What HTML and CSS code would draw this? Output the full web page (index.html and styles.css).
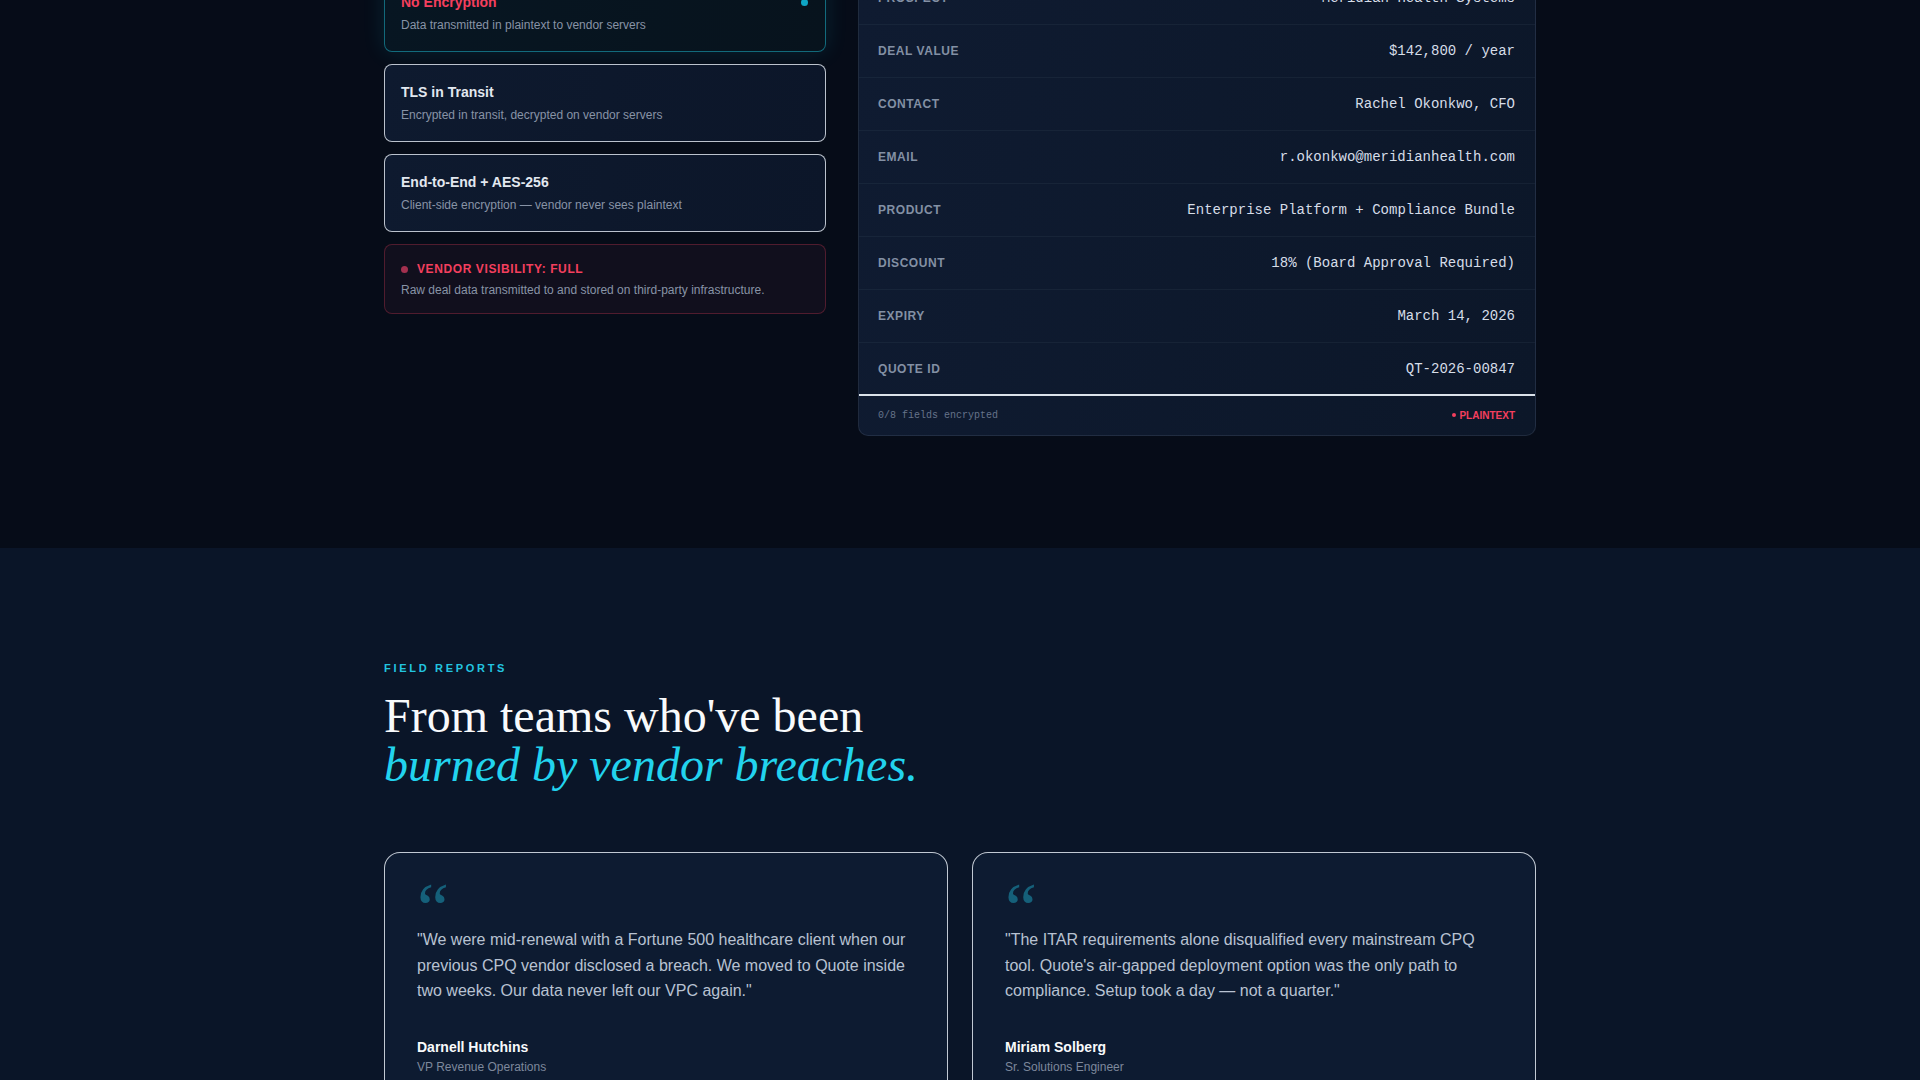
FILE: index.html
```html
<!DOCTYPE html>
<html lang="en">
<head>
<meta charset="utf-8">
<title>Quote — Field Reports</title>
<link rel="stylesheet" href="styles.css">
</head>
<body>
<section class="demo">
  <div class="container demo-grid">
    <div class="levels">
      <div class="level level-active">
        <div class="level-head">
          <span class="level-title level-title-red">No Encryption</span>
          <span class="level-dot"></span>
        </div>
        <p class="level-desc">Data transmitted in plaintext to vendor servers</p>
      </div>
      <div class="level">
        <div class="level-head"><span class="level-title">TLS in Transit</span></div>
        <p class="level-desc">Encrypted in transit, decrypted on vendor servers</p>
      </div>
      <div class="level">
        <div class="level-head"><span class="level-title">End-to-End + AES-256</span></div>
        <p class="level-desc">Client-side encryption — vendor never sees plaintext</p>
      </div>
      <div class="visibility">
        <div class="visibility-head"><span class="visibility-dot"></span><span class="visibility-title">VENDOR VISIBILITY: FULL</span></div>
        <p class="visibility-desc">Raw deal data transmitted to and stored on third-party infrastructure.</p>
      </div>
    </div>

    <div class="quote-panel">
      <div class="row"><span class="row-label">Prospect</span><span class="row-value">Meridian Health Systems</span></div>
      <div class="row"><span class="row-label">Deal Value</span><span class="row-value">$142,800 / year</span></div>
      <div class="row"><span class="row-label">Contact</span><span class="row-value">Rachel Okonkwo, CFO</span></div>
      <div class="row"><span class="row-label">Email</span><span class="row-value">r.okonkwo@meridianhealth.com</span></div>
      <div class="row"><span class="row-label">Product</span><span class="row-value">Enterprise Platform + Compliance Bundle</span></div>
      <div class="row"><span class="row-label">Discount</span><span class="row-value">18% (Board Approval Required)</span></div>
      <div class="row"><span class="row-label">Expiry</span><span class="row-value">March 14, 2026</span></div>
      <div class="row row-last"><span class="row-label">Quote ID</span><span class="row-value">QT-2026-00847</span></div>
      <div class="panel-foot">
        <span class="foot-count">0/8 fields encrypted</span>
        <span class="foot-status"><span class="foot-dot"></span>PLAINTEXT</span>
      </div>
    </div>
  </div>
</section>

<section class="reports">
  <div class="container">
    <p class="eyebrow">FIELD REPORTS</p>
    <h2 class="reports-title">From teams who've been<br><em>burned by vendor breaches.</em></h2>
    <div class="cards">
      <article class="card">
        <div class="card-mark">“</div>
        <p class="card-quote">"We were mid-renewal with a Fortune 500 healthcare client when our previous CPQ vendor disclosed a breach. We moved to Quote inside two weeks. Our data never left our VPC again."</p>
        <div class="card-author">
          <span class="author-name">Darnell Hutchins</span>
          <span class="author-role">VP Revenue Operations</span>
        </div>
      </article>
      <article class="card">
        <div class="card-mark">“</div>
        <p class="card-quote">"The ITAR requirements alone disqualified every mainstream CPQ tool. Quote's air-gapped deployment option was the only path to compliance. Setup took a day — not a quarter."</p>
        <div class="card-author">
          <span class="author-name">Miriam Solberg</span>
          <span class="author-role">Sr. Solutions Engineer</span>
        </div>
      </article>
    </div>
  </div>
</section>
</body>
</html>
```

FILE: styles.css
```css
* { box-sizing: border-box; }

html, body {
  margin: 0;
  padding: 0;
  height: 1080px;
  overflow: hidden;
}

body {
  font-family: "Liberation Sans", Arial, sans-serif;
  background: #060c18;
  color: #e2e8f0;
}

p { margin: 0; }

.container {
  width: 1152px;
  margin: 0 auto;
}

/* ---------- Demo section ---------- */
.demo {
  background: #060c18;
  padding-bottom: 112px;
}

.demo-grid {
  display: grid;
  grid-template-columns: 442px 1fr;
  column-gap: 32px;
  align-items: start;
  margin-top: -28px;
}

.levels {
  display: flex;
  flex-direction: column;
  gap: 12px;
  padding-top: 2px;
}

.level {
  border: 1px solid rgba(226, 232, 240, 0.82);
  border-radius: 8px;
  padding: 17px 16px 17px;
  background: linear-gradient(100deg, #0e1a2f 0%, #0c1629 100%);
}

.level-active {
  border-color: rgba(34, 211, 238, 0.45);
  background: linear-gradient(100deg, #071622 0%, #07131d 100%);
  box-shadow: 0 0 22px rgba(34, 211, 238, 0.12);
}

.level-head {
  display: flex;
  align-items: center;
  justify-content: space-between;
  height: 20px;
  margin-bottom: 4px;
}

.level-title {
  font-size: 14px;
  font-weight: 700;
  color: #e2e8f0;
}

.level-title-red { color: #f43f5e; }

.level-dot {
  width: 7px;
  height: 7px;
  border-radius: 50%;
  background: #0ea5c4;
  margin-right: 1px;
}

.level-desc {
  font-size: 12px;
  line-height: 18px;
  color: #8893a6;
}

.visibility {
  border: 1px solid rgba(244, 63, 94, 0.28);
  border-radius: 8px;
  padding: 15px 16px 14px;
  background: #110f1d;
}

.visibility-head {
  display: flex;
  align-items: center;
  gap: 9px;
  height: 18px;
  margin-bottom: 3px;
}

.visibility-dot {
  width: 7px;
  height: 7px;
  border-radius: 50%;
  background: #a3304f;
}

.visibility-title {
  font-size: 12px;
  font-weight: 700;
  letter-spacing: 0.6px;
  color: #f43f5e;
}

.visibility-desc {
  font-size: 12px;
  line-height: 18px;
  color: #8893a6;
}

.quote-panel {
  background: linear-gradient(100deg, #0f1b31 0%, #0c1729 100%);
  border: 1px solid rgba(148, 163, 184, 0.14);
  border-top: none;
  border-radius: 0 0 10px 10px;
}

.row {
  display: flex;
  align-items: center;
  justify-content: space-between;
  height: 53px;
  padding: 0 20px 0 19px;
  border-bottom: 1px solid rgba(148, 163, 184, 0.07);
}

.row-last {
  border-bottom: 2px solid #dbe2ea;
}

.row-label {
  font-size: 12px;
  font-weight: 700;
  letter-spacing: 0.55px;
  text-transform: uppercase;
  color: #8390a4;
}

.row-value {
  font-family: "Liberation Mono", "Courier New", monospace;
  font-size: 14px;
  color: #d6dde8;
}

.panel-foot {
  display: flex;
  align-items: center;
  justify-content: space-between;
  height: 39px;
  padding: 0 20px 1px 19px;
}

.foot-count {
  font-family: "Liberation Mono", "Courier New", monospace;
  font-size: 10px;
  color: #66738a;
}

.foot-status {
  display: flex;
  align-items: center;
  gap: 3px;
  font-size: 10px;
  font-weight: 700;
  color: #f43f5e;
}

.foot-dot {
  width: 4px;
  height: 4px;
  border-radius: 50%;
  background: #f43f5e;
}

/* ---------- Reports section ---------- */
.reports {
  background: #0a1528;
  padding-top: 112px;
  height: 600px;
}

.eyebrow {
  font-size: 11px;
  font-weight: 700;
  letter-spacing: 2.7px;
  line-height: 16px;
  color: #22c5e0;
  margin-bottom: 15px;
}

.reports-title {
  margin: 0;
  font-family: "Liberation Serif", "Times New Roman", serif;
  font-weight: 400;
  font-size: 48px;
  line-height: 49px;
  color: #f8fafc;
}

.reports-title em {
  font-style: italic;
  color: #22d3ee;
}

.cards {
  display: grid;
  grid-template-columns: 1fr 1fr;
  gap: 24px;
  margin-top: 63px;
}

.card {
  border: 1px solid rgba(226, 232, 240, 0.85);
  border-radius: 16px;
  background: #0d1b31;
  padding: 26px 32px 32px;
  min-height: 300px;
}

.card-mark {
  font-family: "Liberation Serif", "Times New Roman", serif;
  font-size: 72px;
  line-height: 49px;
  height: 49px;
  padding-top: 6px;
  box-sizing: content-box;
  margin-bottom: -7px;
  color: #15607a;
  font-weight: 400;
}

.card-quote {
  margin-top: 0;
  font-size: 16px;
  line-height: 25.6px;
  color: #b8c2d2;
}

.card-author {
  display: flex;
  flex-direction: column;
  margin-top: 33px;
}

.author-name {
  font-size: 14px;
  font-weight: 700;
  line-height: 20px;
  color: #f8fafc;
}

.author-role {
  margin-top: 1px;
  font-size: 12px;
  line-height: 18px;
  color: #7d889c;
}
```
